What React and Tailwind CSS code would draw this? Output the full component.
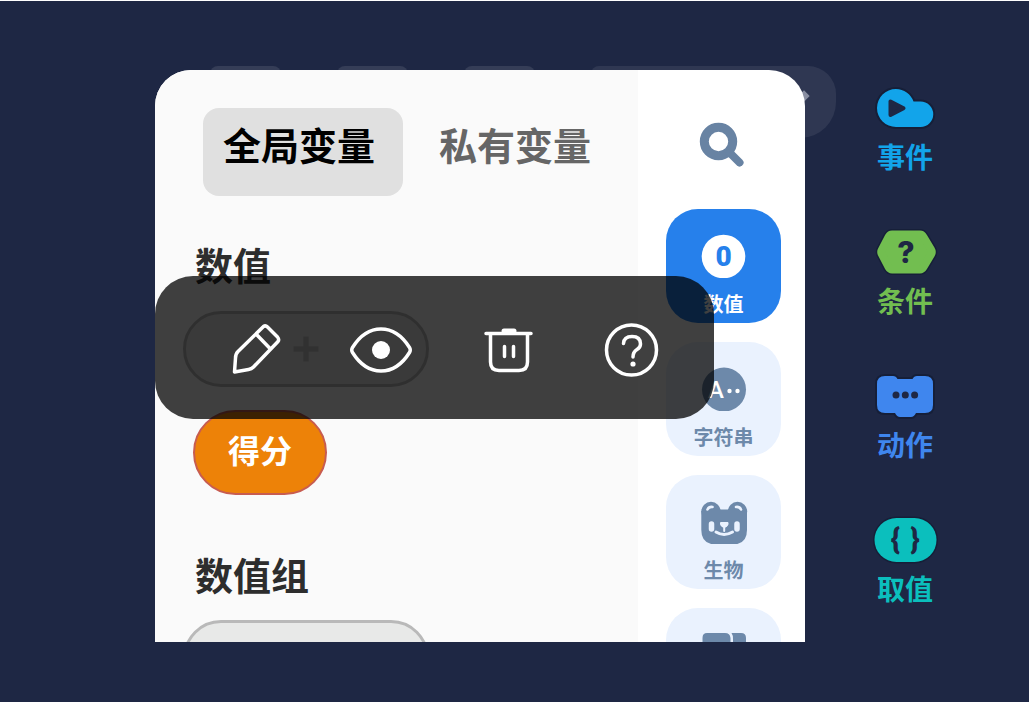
import React, { useState } from "react";

const categories = [
    { id: "number", label: "数值", Icon: NumberIcon },
    { id: "string", label: "字符串", Icon: StringIcon },
    { id: "creature", label: "生物", Icon: BearIcon },
    { id: "block", label: "", Icon: BlockIcon },
];

const blocks = [
    { label: "事件", color: "text-[#12a4ea]", Icon: EventIcon },
    { label: "条件", color: "text-[#72be50]", Icon: ConditionIcon },
    { label: "动作", color: "text-[#3f86ee]", Icon: ActionIcon },
    { label: "取值", color: "text-[#0bbfbd]", Icon: ValueIcon },
];

function SearchIcon() {
    return (
        <svg className="w-12 h-12" viewBox="0 0 48 48" fill="none" stroke="#6883a3" aria-hidden="true">
            <circle cx="20.5" cy="20.5" r="14.2" strokeWidth="9" />
            <path d="M32 32L41.5 41.5" strokeWidth="8" strokeLinecap="round" />
        </svg>
    );
}

function NumberIcon() {
    return (
        <svg className="w-12 h-11" viewBox="0 0 48 44" aria-hidden="true">
            <circle cx="23.500" cy="22.5" r="21.8" fill="#fff" />
            <text x="23.500" y="32" textAnchor="middle" fontSize="28" fontWeight="900" fontFamily="Roboto, sans-serif" fill="#2680eb">0</text>
        </svg>
    );
}

function StringIcon() {
    return (
        <svg className="w-12 h-11" viewBox="0 0 48 44" aria-hidden="true">
            <circle cx="24" cy="22.5" r="22" fill="#6d89aa" />
            <text x="16" y="31" textAnchor="middle" fontSize="24" fontWeight="500" fontFamily="Roboto, sans-serif" fill="#fff">A</text>
            <circle cx="29.5" cy="24" r="2.2" fill="#fff" />
            <circle cx="37.5" cy="24" r="2.2" fill="#fff" />
        </svg>
    );
}

function BearIcon() {
    return (
        <svg className="w-12 h-11" viewBox="0 0 48 44" aria-hidden="true">
            <g fill="#6d89aa">
                <circle cx="11" cy="11.5" r="9.7" />
                <circle cx="37.5" cy="11.5" r="9.7" />
                <path d="M1.300 11V30Q1.300 44.500 16 44.500H32.500Q47 44.500 47 30V11L37 9.500H11Z" />
            </g>
            <g fill="none" stroke="#eaf2fe" strokeLinecap="round">
                <path d="M7.500 9.500Q9 6.500 12.500 7M41 9.500Q39.500 6.500 36 7" strokeWidth="2.600" />
                <path d="M11.500 24V29M37 24V29" strokeWidth="5.500" />
                <path d="M16 32Q24 37 32.500 32" strokeWidth="3" />
                <path d="M24.200 27V31" strokeWidth="2" />
            </g>
            <path d="M20.500 22H28Q29.500 24 27 26.500Q24.200 29 21.500 26.500Q19 24 20.500 22Z" fill="#eaf2fe" />
        </svg>
    );
}

function BlockIcon() {
    return (
        <svg className="w-12 h-11" viewBox="0 0 48 44" fill="#6d89aa" aria-hidden="true">
            <path d="M2.500 44V5Q2.500 0 7 0H25Q30 0 30.500 5V44Z" />
            <path d="M31.500 0H41Q46 0 46 5V44H33V6Q33 2 31.500 0Z" />
        </svg>
    );
}

function EventIcon() {
    const shape = "M25 5A19 19 0 0 1 42.500 17.500H49.500A12.700 12.700 0 0 1 49.500 43H25A19 19 0 0 1 25 5Z";

    return (
        <svg className="w-[68px] h-12" viewBox="0 0 68 48" aria-hidden="true">
            <path d={shape} fill="#161f38" stroke="#161f38" strokeWidth="4" />
            <path d={shape} fill="#12a4ea" />
            <path d="M19.500 17.500V31L32.500 24.200Z" fill="#1e2744" stroke="#1e2744" strokeWidth="4" strokeLinejoin="round" />
        </svg>
    );
}

function ConditionIcon() {
    const shape = "M21 6.500H49Q51 6.500 52.500 9L60 21.500Q61.500 24 60 26.500L52.500 39Q51 41.500 49 41.500H21Q19 41.500 17.500 39L11 26.500Q9.500 24 11 21.500L17.500 9Q19 6.500 21 6.500Z";

    return (
        <svg className="w-[68px] h-12" viewBox="0 0 68 48" aria-hidden="true">
            <path d={shape} fill="#161f38" stroke="#161f38" strokeWidth="11" strokeLinejoin="round" />
            <path d={shape} fill="#72be50" stroke="#72be50" strokeWidth="8" strokeLinejoin="round" />
            <text x="35" y="35" textAnchor="middle" fontSize="30" fontWeight="800" fontFamily="Inter, sans-serif" fill="#1e2744">?</text>
        </svg>
    );
}

function ActionIcon() {
    const shape = "M14 4H22Q25 4 26.500 7H41.500Q43 4 46 4H54Q62 4 62 12V33Q62 41 54 41H45Q43 45 40 45H29Q26 45 24 41H14Q6 41 6 33V12Q6 4 14 4Z";

    return (
        <svg className="w-[68px] h-12" viewBox="0 0 68 48" aria-hidden="true">
            <path d={shape} fill="#161f38" stroke="#161f38" strokeWidth="4" />
            <path d={shape} fill="#3f86ee" />
            <g fill="#1e2744">
                <circle cx="25" cy="23" r="3.500" />
                <circle cx="34.300" cy="23" r="3.500" />
                <circle cx="43.600" cy="23" r="3.500" />
            </g>
        </svg>
    );
}

function ValueIcon() {
    return (
        <svg className="w-[68px] h-12" viewBox="0 0 68 48" aria-hidden="true">
            <rect x="2" y="0.500" width="65" height="47" rx="23.500" fill="#161f38" />
            <rect x="3.500" y="2" width="62" height="44" rx="22" fill="#0bbfbd" />
            <text x="24.500" y="33" textAnchor="middle" fontSize="29" fontWeight="900" fontFamily="Roboto, sans-serif" fill="#1e2744">{"{"}</text>
            <text x="44" y="33" textAnchor="middle" fontSize="29" fontWeight="900" fontFamily="Roboto, sans-serif" fill="#1e2744">{"}"}</text>
        </svg>
    );
}

function ToolIcon({ children }) {
    return (
        <svg
            className="w-16 h-16"
            viewBox="0 0 64 64"
            fill="none"
            stroke="#fff"
            strokeWidth="3.500"
            strokeLinecap="round"
            strokeLinejoin="round"
            aria-hidden="true"
        >
            {children}
        </svg>
    );
}

function Toolbar() {
    return (
        <div className="absolute left-0 top-[206px] w-[559px] h-[143px] max-w-full pt-1 pl-[38px] pr-5 grid grid-cols-4 items-center rounded-[38px] bg-black/75">
            <button aria-label="编辑" className="flex justify-center">
                <ToolIcon>
                    <path d="M39.500 8.500Q41.500 7 43.500 9L53.500 19Q55.500 21.500 54 23.500L29.500 49Q27.500 51 24.500 51.500L10.500 54L11.500 40Q11.500 36 14 33.500ZM32.500 16.500L46 30.500" />
                </ToolIcon>
            </button>
            <button aria-label="显示" className="flex justify-center">
                <ToolIcon>
                    <path d="M3.500 29.500C12 16 22 11 32 11S52 16 60.500 29.500Q62 32 60.500 34.500C52 48 42 53 32 53S12 48 3.500 34.500Q2 32 3.500 29.500Z" />
                    <circle cx="32" cy="32" r="9" fill="#fff" stroke="none" />
                </ToolIcon>
            </button>
            <button aria-label="删除" className="flex justify-center">
                <ToolIcon>
                    <path d="M12 15.500H57M16.500 16V44Q16.500 52.500 25 52.500H45Q53.500 52.500 53.500 44V16M30.500 28.500V38.500M39.500 28.500V38.500" />
                    <path d="M30 13H40" strokeWidth="5" />
                </ToolIcon>
            </button>
            <button aria-label="帮助" className="flex justify-center">
                <ToolIcon>
                    <circle cx="32.500" cy="32" r="25" />
                    <path d="M24.500 25.500Q25 18.500 33 18.500Q41.500 18.500 41.500 26Q41.500 29.500 38 31.500Q34 34 34 39" />
                    <circle cx="34" cy="46" r="2.600" fill="#fff" stroke="none" />
                </ToolIcon>
            </button>
        </div>
    );
}

export default function App() {
    const [scope, setScope] = useState("global");
    const [active, setActive] = useState("number");

    return (
        <div className="h-screen overflow-hidden flex border-t border-white bg-[#1e2744] pt-[69px] pb-[60px] pl-[155px] pr-6 font-['Noto_Sans_CJK_SC',sans-serif] font-bold">
            <div className="relative isolate flex-1 min-w-0 flex">
                {/* Buttons of the page below, peeking out */}
                <div className="absolute -z-10 -top-1 left-[55px] -right-[31px] h-[72px] flex gap-14">
                    <div className="w-[71px] rounded-lg bg-white/10"></div>
                    <div className="w-[71px] rounded-lg bg-white/10"></div>
                    <div className="w-[71px] rounded-lg bg-white/10"></div>
                    <div className="flex-1 flex items-center justify-end pr-7 rounded-l-lg rounded-r-[36px] rounded-tr-[28px] bg-white/8">
                        <div className="w-2 h-2 mb-3 rotate-45 bg-[#8a8fa2]"></div>
                    </div>
                </div>

                {/* Panel */}
                <div className="flex-1 min-w-0 flex overflow-hidden rounded-t-[36px] bg-white">
                    <main className="flex-1 min-w-0 bg-[#fafafa] pt-[38px] text-[38px] leading-[48px] text-[#2d2d2d] whitespace-nowrap">
                        <div className="flex ml-12">
                            <button
                                onClick={() => setScope("global")}
                                className={`h-[88px] pl-5 pr-7 pb-4 rounded-2xl ${scope === "global" ? "bg-[#e0e0e0] text-black" : "text-[#666]"}`}
                            >
                                全局变量
                            </button>
                            <button
                                onClick={() => setScope("private")}
                                className={`h-[88px] ml-4 pl-5 pr-7 pb-4 rounded-2xl ${scope === "private" ? "bg-[#e0e0e0] text-black" : "text-[#666]"}`}
                            >
                                私有变量
                            </button>
                        </div>

                        <h2 className="mt-11 ml-10">数值</h2>
                        <button aria-label="添加数值" className="mt-[23px] ml-7 w-[246px] h-[76px] flex items-center justify-center rounded-full border-[3px] border-[#bcbcbc] bg-[#e8e8e8]">
                            <svg className="w-7 h-7" viewBox="0 0 28 28" stroke="#c4c4c4" strokeWidth="5.500" aria-hidden="true">
                                <path d="M14 1.500V26.500M1.500 14H26.500" />
                            </svg>
                        </button>
                        <button className="mt-[23px] ml-[38px] w-[134px] h-[85px] pb-2 block rounded-full border-2 border-[#c75c50] bg-[#ed8208] text-[32px] text-white">
                            得分
                        </button>

                        <h2 className="mt-[55px] ml-10">数值组</h2>
                        <button aria-label="添加数值组" className="mt-[22px] ml-7 w-[246px] h-[76px] block rounded-full border-[3px] border-[#b9b9b9] bg-[#e8e9e8]"></button>
                    </main>

                    <aside className="w-[167px] shrink-0 flex flex-col items-center pt-[51px] pl-1">
                        <button aria-label="搜索" className="pr-1">
                            <SearchIcon />
                        </button>
                        <div className="mt-10 flex flex-col gap-[19px]">
                            {categories.map(({ id, label, Icon }) => (
                                <button
                                    key={id}
                                    aria-label={label || "其他"}
                                    onClick={() => setActive(id)}
                                    className={`w-[115px] h-[114px] shrink-0 flex flex-col items-center pt-[25px] rounded-[32px] text-[20px] leading-6 ${
                                        active === id ? "bg-[#2680eb] text-white" : "bg-[#eaf2fe] text-[#6d89aa]"
                                    }`}
                                >
                                    <Icon />
                                    <span className="mt-[14px]">{label}</span>
                                </button>
                            ))}
                        </div>
                    </aside>
                </div>

                <Toolbar />
            </div>

            {/* Block types */}
            <nav className="w-[200px] shrink-0 flex flex-col items-center gap-14 pt-[14px]">
                {blocks.map(({ label, color, Icon }) => (
                    <button key={label} className={`flex flex-col items-center gap-2 text-[28px] leading-8 ${color}`}>
                        <Icon />
                        <span>{label}</span>
                    </button>
                ))}
            </nav>
        </div>
    );
}
